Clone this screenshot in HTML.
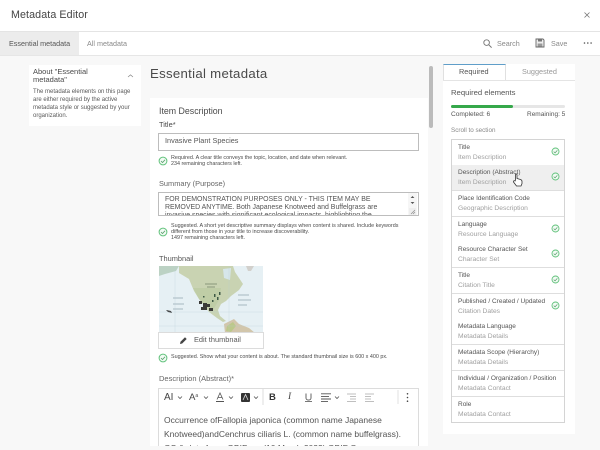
<!DOCTYPE html>
<html><head><meta charset="utf-8">
<style>
html,body{margin:0;padding:0;width:600px;height:450px;overflow:hidden;background:#f8f8f8}
body{position:relative;font-family:"Liberation Sans",sans-serif;color:#4a4a4a;filter:blur(.3px)}
.a,.t{position:absolute}
.t{white-space:nowrap;line-height:1}
.g{color:#6a6a6a}
.s{font-size:5.4px;color:#4a4a4a}
.item{position:absolute;left:452px;width:112px;height:25px;border-bottom:1px solid #dedede;background:#fff}
.item b{position:absolute;left:6px;top:5px;font-weight:normal;font-size:6.5px;color:#555;white-space:nowrap;line-height:1}
.item i{position:absolute;left:6px;top:15px;font-style:normal;font-size:6.7px;color:#a0a0a0;white-space:nowrap;line-height:1}
.item svg{position:absolute;left:99px;top:7px}
svg{display:block}
</style></head><body>
<svg width="0" height="0" style="position:absolute"><defs>
<symbol id="c" viewBox="0 0 10 10"><circle cx="5" cy="5" r="3.9" fill="#f2fbf4" stroke="#62c27c" stroke-width="1"/><path d="M3 5.1 4.500 6.500 7 3.800" fill="none" stroke="#5a9f6e" stroke-width=".8"/></symbol>
</defs></svg>

<div class="a" style="left:0;top:0;width:600px;height:31px;background:#fff"></div>
<div class="t" style="left:11px;top:10px;font-size:10.700px;color:#454545;letter-spacing:.1px">Metadata Editor</div>
<svg class="a" style="left:583px;top:11px" width="8" height="8" viewBox="0 0 8 8"><path d="M1.500 1.500 6.500 6.500M6.500 1.500 1.500 6.500" stroke="#777" stroke-width=".8"/></svg>

<div class="a" style="left:0;top:31px;width:600px;height:1px;background:#e4e4e4"></div>
<div class="a" style="left:0;top:32px;width:600px;height:23px;background:#fff"></div>
<div class="a" style="left:0;top:32px;width:79px;height:23px;background:#ececec"></div>
<div class="a" style="left:0;top:55px;width:600px;height:1px;background:#e6e6e6"></div>
<div class="t" style="left:9px;top:40px;font-size:7.200px;color:#555">Essential metadata</div>
<div class="t" style="left:87px;top:40px;font-size:7.200px;color:#8a8a8a">All metadata</div>
<svg class="a" style="left:482px;top:38px" width="11" height="11" viewBox="0 0 11 11"><circle cx="4.600" cy="4.600" r="2.800" fill="none" stroke="#777" stroke-width=".9"/><path d="M6.800 6.800 9.600 9.600" stroke="#777" stroke-width="1"/></svg>
<div class="t" style="left:497px;top:40px;font-size:7.200px;color:#8a8a8a">Search</div>
<svg class="a" style="left:535px;top:38px" width="10" height="10" viewBox="0 0 10 10"><path d="M1 1H8L9 2V9H1Z" fill="#eee" stroke="#666" stroke-width=".9"/><rect x="3" y="1.200" width="4" height="2.300" fill="#777"/><rect x="2.600" y="5.500" width="4.800" height="3" fill="#999"/></svg>
<div class="t" style="left:551px;top:40px;font-size:7.200px;color:#8a8a8a">Save</div>
<svg class="a" style="left:583px;top:41px" width="10" height="4" viewBox="0 0 10 4"><circle cx="1.500" cy="2" r=".8" fill="#555"/><circle cx="4.800" cy="2" r=".8" fill="#555"/><circle cx="8.100" cy="2" r=".8" fill="#555"/></svg>

<!-- about card -->
<div class="a" style="left:29px;top:65px;width:112px;height:61px;background:#fff"></div>
<div class="t" style="left:33px;top:68px;font-size:7.500px;line-height:8.300px;color:#4a4a4a">About "Essential<br>metadata"</div>
<svg class="a" style="left:127px;top:73px" width="7" height="6" viewBox="0 0 7 6"><path d="M1 4 3.500 1.800 6 4" fill="none" stroke="#888" stroke-width=".7"/></svg>
<div class="t" style="left:33px;top:88px;font-size:6px;line-height:8.100px;color:#5a5a5a">The metadata elements on this page<br>are either required by the active<br>metadata style or suggested by your<br>organization.</div>

<!-- heading -->
<div class="t" style="left:150px;top:67px;font-size:13.200px;color:#4a4a4a;letter-spacing:.3px">Essential metadata</div>

<!-- main card -->
<div class="a" style="left:150px;top:98px;width:278px;height:348px;background:#fff"></div>
<div class="t" style="left:159px;top:107px;font-size:8.800px;color:#4a4a4a">Item Description</div>
<div class="t" style="left:159px;top:121px;font-size:7.400px;color:#4a4a4a">Title*</div>
<div class="a" style="left:158px;top:133px;width:259px;height:16px;border:1px solid #bdbdbd;background:#fff"></div>
<div class="t" style="left:165px;top:137px;font-size:7.300px;color:#555">Invasive Plant Species</div>
<svg class="a" style="left:158px;top:156px" width="10" height="10"><use href="#c"/></svg>
<div class="t s" style="left:171px;top:155px;line-height:6.400px">Required. A clear title conveys the topic, location, and date when relevant.<br>234 remaining characters left.</div>

<div class="t" style="left:159px;top:180px;font-size:7.400px;color:#666">Summary (Purpose)</div>
<div class="a" style="left:158px;top:192px;width:259px;height:23px;border:1px solid #bdbdbd;border-bottom:none;background:#fff;overflow:hidden">
<div class="t" style="left:6px;top:3px;font-size:6.950px;line-height:8px;color:#555">FOR DEMONSTRATION PURPOSES ONLY - THIS ITEM MAY BE<br>REMOVED ANYTIME. Both Japanese Knotweed and Buffelgrass are<br>invasive species with significant ecological impacts, highlighting the</div>
<div class="a" style="left:249px;top:0;width:9px;height:23px;background:#f6f6f6"></div>
<svg class="a" style="left:249px;top:0" width="9" height="23" viewBox="0 0 9 23"><path d="M2.600 5 4.500 3 6.400 5ZM2.600 9 4.500 11 6.400 9Z" fill="#555"/><rect x="1" y="15" width="7" height="7" fill="#eee"/><path d="M3 21 7 17M5 21 7 19" stroke="#888" stroke-width=".6"/></svg>
</div>
<div class="a" style="left:158px;top:215px;width:261px;height:1px;background:#bdbdbd"></div>
<svg class="a" style="left:158px;top:227px" width="10" height="10"><use href="#c"/></svg>
<div class="t s" style="left:171px;top:223px;line-height:6.200px">Suggested. A short yet descriptive summary displays when content is shared. Include keywords<br>different from those in your title to increase discoverability.<br>1497 remaining characters left.</div>

<div class="t" style="left:159px;top:255px;font-size:7.400px;color:#555">Thumbnail</div>
<svg class="a" style="left:159px;top:266px" width="104" height="67" viewBox="0 0 104 67">
<rect width="104" height="67" fill="#e6f0f4"/>
<path d="M0 0H20L17 5 6 8 0 10Z" fill="#bcd2c4"/>
<path d="M20 0H74L76 6 84 18 80 24 72 30 67 35 62 38 59 44 61 50 67 55 64 56 58 52 50 46 44 38 40 33 35 25 30 13 20 7Z" fill="#c9d3b2"/>
<path d="M34 22H62L60 34 54 44 46 40 40 33Z" fill="#bfcda6"/>
<path d="M64 3 72 2 71 14 65 12Z" fill="#d6e6ea"/>
<path d="M87 0H95L92 5 89 5Z" fill="#d2d0cc"/>
<path d="M65 58 75 53 80 58 90 62 96 67H66Z" fill="#d2c6ab"/>
<path d="M68 60 74 56 77 60 72 66 67 65Z" fill="#bcc88a"/>
<path d="M40 35h3v3h-3zM44 37h4v4h-4zM42 41h6v3h-6zM48 38h3v3h-3zM50 42h4v3h-4z" fill="#3b3b38"/>
<path d="M44 30h1.500v1.500h-1.500zM55 28h1.500v3h-1.500zM58 31h1.500v3h-1.500zM60 26h1.500v3h-1.500zM53 34h1.500v2h-1.500z" fill="#3f5a46"/>
<path d="M7 44 12 45 13 47 9 46Z" fill="#333"/>
<path d="M14 32h10M14 38h11M14 43h10M79 29h11M79 34h13M79 39h9" stroke="#7e929c" stroke-width="1" opacity=".6"/>
<path d="M46 18h12M48 21h8" stroke="#6f7f62" stroke-width="1" opacity=".7"/>
<path d="M0 46H104M0 60H104M16 0V67M70 0V67" stroke="#b8cdd6" stroke-width=".4" opacity=".7"/>
</svg>
<div class="a" style="left:158px;top:332px;width:104px;height:15px;border:1px solid #dcdcdc;background:#fff"></div>
<svg class="a" style="left:179px;top:336px" width="9" height="9" viewBox="0 0 9 9"><path d="M1 8 1.500 5.800 6 1.300 7.700 3 3.200 7.500Z" fill="#444"/></svg>
<div class="t" style="left:194px;top:336px;font-size:7.400px;color:#5a5a5a">Edit thumbnail</div>
<svg class="a" style="left:158px;top:353px" width="10" height="10"><use href="#c"/></svg>
<div class="t s" style="left:171px;top:355px;">Suggested. Show what your content is about. The standard thumbnail size is 600 x 400 px.</div>

<div class="t" style="left:159px;top:375px;font-size:7.500px;color:#666">Description (Abstract)*</div>
<div class="a" style="left:158px;top:388px;width:259px;height:18px;border:1px solid #dcdcdc;border-bottom:1px solid #d4d4d4;background:#fff"></div>
<div class="a" style="left:158px;top:407px;width:259px;height:39px;border-left:1px solid #dcdcdc;border-right:1px solid #dcdcdc;background:#fff;overflow:hidden">
<div class="t" style="left:5px;top:6px;font-size:8.500px;line-height:14px;color:#555">Occurrence ofFallopia japonica (common name Japanese<br>Knotweed)andCenchrus ciliaris L. (common name buffelgrass).<br>GS &amp; data from: GBIF.org (10 March 2023) GBIF O</div>
</div>
<div class="t" style="left:164px;top:393px;font-size:10px;color:#444">AI</div>
<div class="t" style="left:189px;top:393px;font-size:9.600px;color:#444">A<span style="font-size:5px;vertical-align:3px">a</span></div>
<svg class="a" style="left:160px;top:388px" width="258" height="19" viewBox="160 388 258 19">
<path d="M178 396.500 180 398.500 182 396.500M204 396.500 206 398.500 208 396.500M229 396.500 231 398.500 233 396.500M254 396.500 256 398.500 258 396.500M335 396.500 337 398.500 339 396.500" fill="none" stroke="#555" stroke-width=".8"/>
<path d="M216 401.500H224" stroke="#555" stroke-width="1" fill="none"/>
<path d="M217 399.500 220 393 223 399.500M218.200 397.500H221.800" fill="none" stroke="#555" stroke-width=".8"/>
<rect x="241" y="393" width="9" height="9" fill="#333" rx="1"/>
<path d="M243 400 245.500 394.500 248 400" fill="none" stroke="#ddd" stroke-width=".8"/>
<path d="M263 389V405" stroke="#dedede"/>
<path d="M398 390V404" stroke="#e0e0e0"/>
<path d="M305 401.500H312" stroke="#555" stroke-width=".8"/>
<path d="M306 393.500V398C306 400.800 311 400.800 311 398V393.500" fill="none" stroke="#555" stroke-width=".9"/>
<path d="M321 393.800H331M321 396.400H329M321 399H331M321 401.600H328" stroke="#555" stroke-width=".9"/>
<path d="M347 394H356M350 396.500H356M350 399H356M347 401.500H356M365 394H374M365 396.500H371M365 399H371M365 401.500H374" stroke="#aaa" stroke-width=".7"/>
<circle cx="407.500" cy="393.800" r=".8" fill="#444"/><circle cx="407.500" cy="397.500" r=".8" fill="#444"/><circle cx="407.500" cy="401.200" r=".8" fill="#444"/>
</svg>
<div class="t" style="left:269px;top:393px;font-size:9.500px;font-weight:bold;color:#333">B</div>
<div class="t" style="left:288px;top:393px;font-size:9.500px;font-style:italic;font-family:'Liberation Serif',serif;color:#444">I</div>

<!-- page scrollbar -->
<div class="a" style="left:429px;top:66px;width:4px;height:62px;background:#bbb;border-radius:2px"></div>

<!-- right panel -->
<div class="a" style="left:443px;top:64px;width:132px;height:370px;background:#fff"></div>
<div class="a" style="left:443px;top:64px;width:63px;height:16px;border-left:1px solid #e0e0e0;border-right:1px solid #e0e0e0;box-sizing:border-box;border-top:1px solid #5f9ec9"></div>
<div class="a" style="left:443px;top:80px;width:132px;height:1px;background:#e4e4e4"></div>
<div class="t" style="left:459px;top:68px;font-size:7.300px;color:#555">Required</div>
<div class="t" style="left:522px;top:68px;font-size:7.300px;color:#999">Suggested</div>
<div class="t" style="left:451px;top:89px;font-size:7.700px;color:#555">Required elements</div>
<div class="a" style="left:451px;top:105px;width:114px;height:3px;background:#e6e6e6;border-radius:2px"></div>
<div class="a" style="left:451px;top:105px;width:62px;height:3px;background:#35a84a;border-radius:2px"></div>
<div class="t" style="left:451px;top:112px;font-size:6.600px;color:#555">Completed: 6</div>
<div class="t" style="left:527px;top:112px;font-size:6.500px;color:#555">Remaining: 5</div>
<div class="t" style="left:451px;top:128px;font-size:6.300px;color:#888">Scroll to section</div>

<div class="a" style="left:451px;top:139px;width:114px;height:284px;border:1px solid #d4d4d4;box-sizing:border-box;background:#fff"></div>
<div class="item" style="top:140px"><b>Title</b><i>Item Description</i><svg width="9" height="9"><use href="#c"/></svg></div>
<div class="item" style="top:165px;background:#efefef"><b>Description (Abstract)</b><i>Item Description</i><svg width="9" height="9"><use href="#c"/></svg></div>
<div class="item" style="top:191px"><b>Place Identification Code</b><i>Geographic Description</i></div>
<div class="item" style="top:217px"><b>Language</b><i>Resource Language</i><svg width="9" height="9"><use href="#c"/></svg></div>
<div class="item" style="top:242px"><b>Resource Character Set</b><i>Character Set</i><svg width="9" height="9"><use href="#c"/></svg></div>
<div class="item" style="top:268px"><b>Title</b><i>Citation Title</i><svg width="9" height="9"><use href="#c"/></svg></div>
<div class="item" style="top:294px"><b>Published / Created / Updated</b><i>Citation Dates</i><svg width="9" height="9"><use href="#c"/></svg></div>
<div class="item" style="top:319px"><b>Metadata Language</b><i>Metadata Details</i></div>
<div class="item" style="top:345px"><b>Metadata Scope (Hierarchy)</b><i>Metadata Details</i></div>
<div class="item" style="top:371px"><b>Individual / Organization / Position</b><i>Metadata Contact</i></div>
<div class="item" style="top:397px;height:25px;border-bottom:none"><b>Role</b><i>Metadata Contact</i></div>
<svg class="a" style="left:512px;top:173px" width="11" height="14" viewBox="0 0 11 14"><path d="M3.500 7V1.800C3.500.7 5 .7 5 1.800V5.500L8.500 6.500C9.500 6.800 10 7.500 10 8.500V10.500L9 13H4.500L1.500 9C1 8 2.300 7.200 3 8Z" fill="#fff" stroke="#333" stroke-width=".8"/></svg>
</body></html>
